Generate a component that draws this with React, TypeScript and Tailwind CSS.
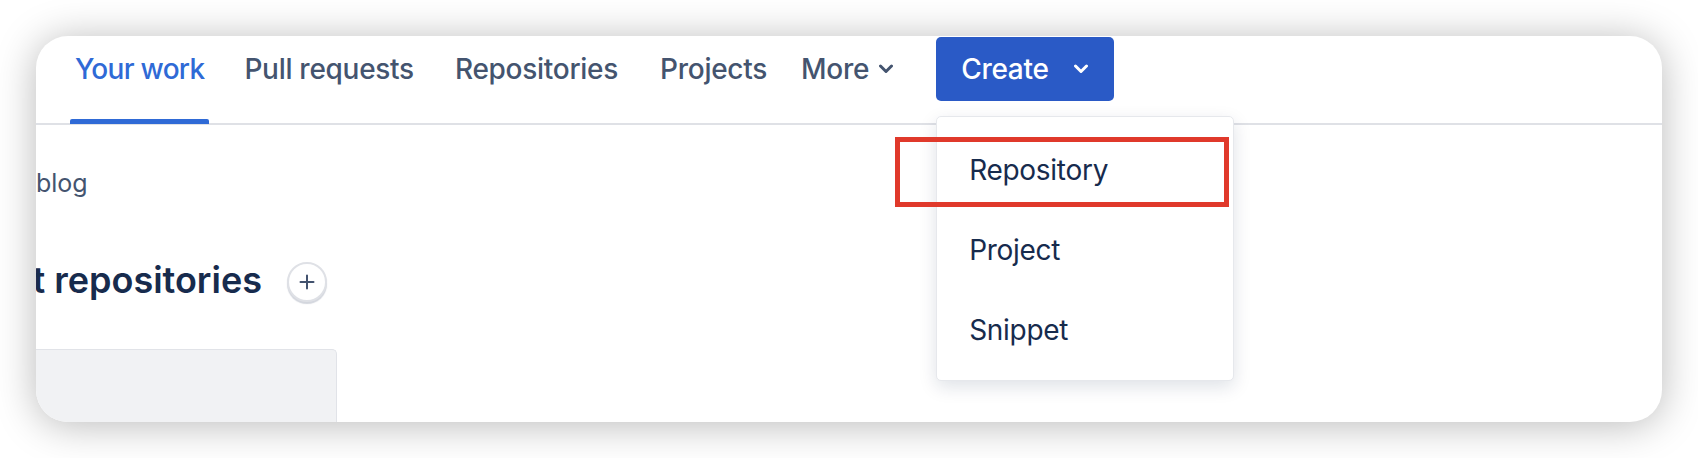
import React from "react";

function Chevron({ color }: { color: string }) {
  return (
    <svg width="16" height="10" viewBox="0 0 16 10" fill="none">
      <path d="M2.5 2 L8 7.5 L13.5 2" stroke={color} strokeWidth="3" strokeLinecap="round" strokeLinejoin="round" />
    </svg>
  );
}

export default function App() {
  return (
    <div className="w-[1698px] h-[458px] bg-white pt-[36px] pl-[36px] font-['Inter',sans-serif] overflow-hidden">
      <div className="w-[1626px] h-[386px] rounded-[32px] bg-white overflow-hidden relative shadow-[0_3px_40px_rgba(0,0,0,0.28)] flex flex-col">
        {/* Header */}
        <div className="h-[89px] shrink-0 border-b-2 border-[#dfe1e6] flex items-start pl-[34px] text-[28px] font-medium tracking-[-0.01em] text-[#44546f]">
          <div className="flex flex-col h-full">
            <div className="h-[65px] pt-[1px] flex items-center px-[5px] text-[#2f6ad6] tracking-[-0.025em] whitespace-nowrap">Your work</div>
            <div className="mt-auto h-[5px] bg-[#2f6ad6] rounded-t-[2px] -mb-[1px]" />
          </div>
          <div className="h-[65px] pt-[1px] flex items-center ml-[35px] whitespace-nowrap">Pull requests</div>
          <div className="h-[65px] pt-[1px] flex items-center ml-[41px] whitespace-nowrap">Repositories</div>
          <div className="h-[65px] pt-[1px] flex items-center ml-[42px] whitespace-nowrap">Projects</div>
          <div className="h-[65px] pt-[1px] flex items-center ml-[34px] whitespace-nowrap gap-[9px]">
            <span>More</span>
            <Chevron color="#44546f" />
          </div>
          <div className="relative mt-[1px] ml-[42px]">
            <div className="w-[178px] h-[64px] rounded-[5px] bg-[#2a5ac6] flex items-center pl-[25px] text-white">
              <span>Create</span>
              <span className="ml-[24px] flex"><Chevron color="#ffffff" /></span>
            </div>
            {/* Dropdown menu */}
            <div className="absolute left-0 top-[79px] w-[298px] h-[265px] bg-white border border-[#e6e8ec] rounded-[5px] shadow-[0_6px_18px_rgba(9,30,66,0.13)] pt-[13px] text-[28px] tracking-[-0.01em] font-normal text-[#172b4d] z-10">
              <div className="h-[80px] flex items-center pl-[32px]">Repository</div>
              <div className="h-[80px] flex items-center pl-[32px]">Project</div>
              <div className="h-[80px] flex items-center pl-[32px]">Snippet</div>
              <div className="absolute left-[-42px] top-[20px] w-[334px] h-[70px] border-[5px] border-[#e0392b]" />
            </div>
          </div>
        </div>

        {/* Body */}
        <div className="flex flex-col">
          <div className="mt-[43px] h-[30px] leading-[30px] text-[25px] text-[#44546f] whitespace-nowrap">blog</div>
          <div className="mt-[60px] h-[44px] flex items-center">
            <div className="w-[226px] flex justify-end">
              <span className="text-[36px] leading-[44px] font-semibold tracking-[0em] text-[#172b4d] whitespace-nowrap">Recent repositories</span>
            </div>
            <div className="ml-[25px] mt-[4px] w-[40px] h-[40px] rounded-full border-2 border-[#dfe1e6] bg-white shadow-[0_2px_1px_rgba(9,30,66,0.18)] flex items-center justify-center">
              <svg width="16" height="16" viewBox="0 0 16 16" fill="none">
                <path d="M8 1.5 V14.5 M1.5 8 H14.5" stroke="#42526e" strokeWidth="2" strokeLinecap="round" />
              </svg>
            </div>
          </div>
          <div className="mt-[47px] w-[301px] h-[100px] bg-[#f1f2f4] border-t border-r border-[#e1e3e8] rounded-tr-[5px]" />
        </div>
      </div>
    </div>
  );
}
